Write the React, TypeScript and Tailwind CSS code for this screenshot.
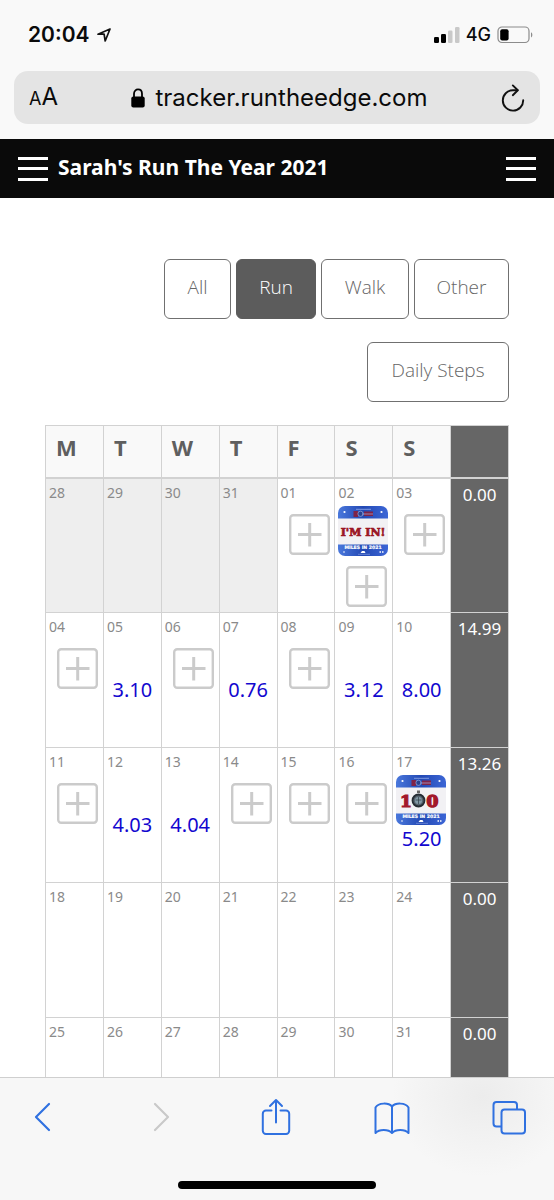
import React from "react";

type Activity = { date: string; out?: boolean; add?: boolean; miles?: string; badge?: "in" | "100" };
type Week = { days: Activity[]; total: string };

const weeks: Week[] = [
  {
    total: "0.00",
    days: [
      { date: "28", out: true },
      { date: "29", out: true },
      { date: "30", out: true },
      { date: "31", out: true },
      { date: "01", add: true },
      { date: "02", badge: "in", add: true },
      { date: "03", add: true },
    ],
  },
  {
    total: "14.99",
    days: [
      { date: "04", add: true },
      { date: "05", miles: "3.10" },
      { date: "06", add: true },
      { date: "07", miles: "0.76" },
      { date: "08", add: true },
      { date: "09", miles: "3.12" },
      { date: "10", miles: "8.00" },
    ],
  },
  {
    total: "13.26",
    days: [
      { date: "11", add: true },
      { date: "12", miles: "4.03" },
      { date: "13", miles: "4.04" },
      { date: "14", add: true },
      { date: "15", add: true },
      { date: "16", add: true },
      { date: "17", badge: "100", miles: "5.20" },
    ],
  },
  { total: "0.00", days: ["18", "19", "20", "21", "22", "23", "24"].map((date) => ({ date })) },
  { total: "0.00", days: ["25", "26", "27", "28", "29", "30", "31"].map((date) => ({ date })) },
];

const filters = [
  { label: "All", width: "w-[67px]" },
  { label: "Run", width: "w-[80px]", active: true },
  { label: "Walk", width: "w-[88px]" },
  { label: "Other", width: "w-[95px]" },
  { label: "Daily Steps", width: "w-[142px]" },
];

function Badge({ kind }: { kind: "in" | "100" }) {
  const id = `band-${kind}`;
  return (
    <svg viewBox="0 0 50 50" className="mt-[3px] size-[50px]" role="img" aria-label={kind === "in" ? "I'm in badge" : "100 miles badge"}>
      <defs>
        <linearGradient id={id} x1="0" x2="1" y1="0" y2="0">
          <stop offset="0" stopColor="#4a78dc" />
          <stop offset="0.5" stopColor="#2349b4" />
          <stop offset="1" stopColor="#3c66d6" />
        </linearGradient>
      </defs>
      <rect width="50" height="50" rx="7" fill={`url(#${id})`} />
      <rect y="12.5" width="50" height="26" fill="#f2f1f4" />
      <rect x="18" y="2.8" width="15" height="1" fill="#7f9ae0" />
      <path d="M15.500 5h4.500v6h-4.500zM26 5.500h9v4.500h-9z" fill="#7f2348" />
      <circle cx="22.500" cy="7.800" r="2.600" fill="#28418f" stroke="#8fa0d4" strokeWidth="0.8" />
      <path d="M24 8h11" stroke="#a9b2de" strokeWidth="0.7" />
      <g fill="#fff">
        <circle cx="6.5" cy="6" r="1.1" />
        <circle cx="43.5" cy="6" r="1.1" />
        <circle cx="6" cy="46" r="0.8" />
        <path d="M22.500 47l1.500-2h2.500l1 2zM41.500 45.300h1.500v1.500h-1.500zM44 45.300h1.500v1.500H44z" />
      </g>
      <path d="M20 48.300h12" stroke="#7f9ae0" strokeWidth="0.7" />
      {kind === "in" ? (
        <text x="25" y="30" textAnchor="middle" fontSize="11" fontWeight="700" fill="#9b1726" stroke="#9b1726" strokeWidth="0.7" fontFamily="'DejaVu Serif', serif">
          I'M IN!
        </text>
      ) : (
        <>
          <text x="10" y="31.5" textAnchor="middle" fontSize="17" fontWeight="700" fill="#a3182a" stroke="#a3182a" strokeWidth="1.2" fontFamily="'DejaVu Serif', serif">
            1
          </text>
          <text x="36.5" y="31.5" textAnchor="middle" fontSize="17" fontWeight="700" fill="#a3182a" stroke="#a3182a" strokeWidth="1.6" fontFamily="'DejaVu Serif', serif">
            0
          </text>
          <rect x="21" y="15.5" width="3" height="2.5" fill="#666" />
          <circle cx="22.5" cy="25.5" r="6" fill="#55626d" stroke="#252c33" strokeWidth="1.8" />
          <circle cx="22.5" cy="25.5" r="3.6" fill="#8198a5" />
          <path d="M19.5 25h6M22.5 22v7" stroke="#384651" strokeWidth="0.8" />
        </>
      )}
      <text x="25" y="43.400" textAnchor="middle" fontSize="4.600" fontWeight="700" fill="#fff" stroke="#fff" strokeWidth="0.2" fontFamily="'DejaVu Sans', sans-serif">
        MILES IN 2021
      </text>
    </svg>
  );
}

function AddButton({ date, gap }: { date: string; gap: string }) {
  return (
    <button type="button" aria-label={`Add activity on ${date}`} className={`ml-2 block size-[41px] ${gap}`}>
      <svg viewBox="0 0 41 41" className="size-full" fill="none" stroke="#cbcbcb">
        <rect x="1.2" y="1.2" width="38.6" height="38.6" rx="3" strokeWidth="2.4" />
        <path d="M9 20.5h23.5M20.7 9v23.5" strokeWidth="3" />
      </svg>
    </button>
  );
}

function DayCell({ day }: { day: Activity }) {
  return (
    <td className={`h-[135px] border border-[#d2d2d2] px-[3px] pt-1 align-top ${day.out ? "bg-[#eeeeee]" : "bg-white"}`}>
      <div className="text-sm/5 text-[#8a8a8a]">{day.date}</div>
      {day.badge && <Badge kind={day.badge} />}
      {day.add && <AddButton date={day.date} gap={day.badge ? "mt-[10px]" : "mt-[11px]"} />}
      {day.miles && (
        <a href="#activity" className={`block text-center text-xl/7 text-[#1207cf] ${day.badge ? "mt-0" : "mt-[39px]"}`}>
          {day.miles}
        </a>
      )}
    </td>
  );
}

function MenuButton({ label }: { label: string }) {
  return (
    <button type="button" aria-label={label} className="flex h-6 w-[30px] flex-col justify-between">
      <span className="h-[3px] w-full bg-white" />
      <span className="h-[3px] w-full bg-white" />
      <span className="h-[3px] w-full bg-white" />
    </button>
  );
}

function StatusBar() {
  return (
    <div className="flex h-[69px] items-center justify-between pr-[21px] pl-7">
      <div className="flex items-center gap-2">
        <span className="text-[21px]/7 font-semibold">20:04</span>
        <svg viewBox="0 0 14 14" className="size-[14px]" fill="none" stroke="#111" strokeWidth="1.7" strokeLinejoin="round">
          <path d="M13 1L1 6.2h6.1L8.2 13z" />
        </svg>
      </div>
      <div className="flex items-center">
        <svg viewBox="0 0 26 16" className="h-4 w-[26px]">
          <rect x="0" y="10" width="5" height="6" rx="1.3" />
          <rect x="7" y="7" width="5" height="9" rx="1.3" />
          <rect x="14" y="3.5" width="4.5" height="12.5" rx="1.3" fill="#c9c9c9" />
          <rect x="21" y="0" width="4.5" height="16" rx="1.3" fill="#c9c9c9" />
        </svg>
        <span className="ml-[6px] text-lg/6 font-medium">4G</span>
        <svg viewBox="0 0 36 18" className="ml-[6px] h-[18px] w-9" fill="none">
          <rect x="1" y="1" width="31" height="15.5" rx="4" stroke="#8c8c8c" strokeWidth="1.2" />
          <rect x="3.2" y="3.2" width="8.4" height="11.2" rx="2" fill="#000" />
          <path d="M34 6.2c1.8.9 1.8 4.3 0 5.2z" fill="#8c8c8c" />
        </svg>
      </div>
    </div>
  );
}

function AddressBar() {
  return (
    <div className="mx-[14px] mt-[2px] mb-[15px] flex h-[53px] items-center justify-between rounded-[14px] bg-[#e4e4e4] px-[15px]">
      <button type="button" aria-label="Text size" className="flex items-baseline">
        <span className="text-lg/8">A</span>
        <span className="text-2xl/8">A</span>
      </button>
      <div className="flex items-center gap-[10px]">
        <svg viewBox="0 0 14 20" className="h-5 w-[14px]">
          <rect x="0.3" y="8.5" width="13.4" height="11" rx="2" />
          <path d="M3 9.5V5.8C3 0 11 0 11 5.8v3.7" fill="none" stroke="#000" strokeWidth="1.8" />
        </svg>
        <span className="text-2xl/8">tracker.runtheedge.com</span>
      </div>
      <button type="button" aria-label="Reload">
        <svg viewBox="0 0 24 28" className="h-7 w-6" fill="none" stroke="#111" strokeWidth="1.9" strokeLinecap="round" strokeLinejoin="round">
          <path d="M22.2 16.2A10.2 10.2 0 1 1 12 6.2h4.6" />
          <path d="M11.8 1.4l5 4.9-5 4.9" />
        </svg>
      </button>
    </div>
  );
}

function Toolbar() {
  return (
    <footer className="shrink-0 border-t border-[#cfcfcf] bg-[#f7f7f7] bg-[radial-gradient(ellipse_90px_80px_at_87%_15%,#ececec,#f7f7f7)]">
      <nav aria-label="Browser" className="flex h-[78px] items-center justify-between pr-[28px] pl-[26px] text-[#3071e0]">
        <button type="button" aria-label="Back">
          <svg viewBox="0 0 34 38" className="h-[38px] w-[34px]" fill="none" stroke="currentColor" strokeWidth="2.2" strokeLinecap="round" strokeLinejoin="round">
            <path d="M23 6L10 19l13 13" />
          </svg>
        </button>
        <button type="button" aria-label="Forward" disabled className="text-[#c9c9c9]">
          <svg viewBox="0 0 34 38" className="h-[38px] w-[34px]" fill="none" stroke="currentColor" strokeWidth="2.2" strokeLinecap="round" strokeLinejoin="round">
            <path d="M13 6l13 13-13 13" />
          </svg>
        </button>
        <button type="button" aria-label="Share">
          <svg viewBox="0 0 34 38" className="h-[38px] w-[34px]" fill="none" stroke="currentColor" strokeWidth="2" strokeLinecap="round" strokeLinejoin="round">
            <path d="M13.500 12.500H8a3.200 3.200 0 0 0-3.200 3.200v17.100A3.200 3.200 0 0 0 8 36h20a3.200 3.200 0 0 0 3.200-3.200V15.700A3.200 3.200 0 0 0 28 12.500h-5.500" />
            <path d="M18 24.500V2M12 8l6-6 6 6" />
          </svg>
        </button>
        <button type="button" aria-label="Bookmarks">
          <svg viewBox="0 0 36 38" className="h-[38px] w-9" fill="none" stroke="currentColor" strokeWidth="2" strokeLinejoin="round">
            <path d="M18 8.500C14.500 4.500 4.500 4.500 1.500 9.500V35C5 31 14.500 31 18 35C21.500 31 31 31 34.500 35V9.500C31.500 4.500 21.500 4.500 18 8.500zM18 8.500V35" />
          </svg>
        </button>
        <button type="button" aria-label="Tabs">
          <svg viewBox="0 0 34 38" className="h-[38px] w-[34px]" fill="none" stroke="currentColor" strokeWidth="2">
            <rect x="9.500" y="11.500" width="23.500" height="24" rx="3" />
            <path d="M9.500 28.500H4.500a3 3 0 0 1-3-3V7a3 3 0 0 1 3-3h17.500a3 3 0 0 1 3 3V11.500" />
          </svg>
        </button>
      </nav>
      <div className="flex h-11 items-end justify-center pb-[11px]">
        <div className="h-2 w-[198px] rounded-full bg-black" />
      </div>
    </footer>
  );
}

export default function App() {
  return (
    <div className="flex h-screen flex-col overflow-hidden bg-white font-['Noto_Sans',sans-serif]">
      <header className="shrink-0 bg-[#f9f9f9] font-[Inter,sans-serif] text-[#0b0b0b]">
        <StatusBar />
        <AddressBar />
      </header>
      <div className="flex h-[59px] shrink-0 items-center justify-between bg-[#0a0a0a] px-[18px]">
        <div className="flex items-center gap-[10px]">
          <MenuButton label="Open menu" />
          <h1 className="pb-1 text-[21px]/7 font-bold text-white">Sarah's Run The Year 2021</h1>
        </div>
        <MenuButton label="Open options" />
      </div>
      <main className="min-h-0 flex-1 overflow-y-auto px-[45px] pt-[61px] [scrollbar-width:none]">
        <div className="flex flex-wrap justify-end gap-x-[5px] gap-y-[23px] pl-16">
          {filters.map((f) => (
            <button
              key={f.label}
              type="button"
              aria-pressed={Boolean(f.active)}
              className={`h-[60px] rounded-md border pb-1 font-['Open_Sans',sans-serif] text-[19px]/7 font-light whitespace-nowrap ${f.width} ${
                f.active ? "border-[#5c5c5c] bg-[#5c5c5c] text-white" : "border-[#707070] bg-white text-[#666666]"
              }`}
            >
              {f.label}
            </button>
          ))}
        </div>
        <table className="mt-[23px] w-full table-fixed border-collapse" aria-label="January 2021">
          <thead>
            <tr>
              {["M", "T", "W", "T", "F", "S", "S"].map((d, i) => (
                <th key={i} scope="col" className="h-[52px] border border-b-2 border-[#d2d2d2] bg-[#f9f9f9] pb-2 pl-[10px] text-left text-[22px]/7 font-bold text-[#5f5f5f]">
                  {d}
                </th>
              ))}
              <th scope="col" aria-label="Weekly total" className="border border-b-2 border-[#d2d2d2] bg-[#666666]" />
            </tr>
          </thead>
          <tbody>
            {weeks.map((week, i) => (
              <tr key={i}>
                {week.days.map((day) => (
                  <DayCell key={day.date} day={day} />
                ))}
                <td className="border border-[#d2d2d2] bg-[#666666] pt-1 text-center align-top text-[17px]/6 text-white">{week.total}</td>
              </tr>
            ))}
          </tbody>
        </table>
      </main>
      <Toolbar />
    </div>
  );
}
